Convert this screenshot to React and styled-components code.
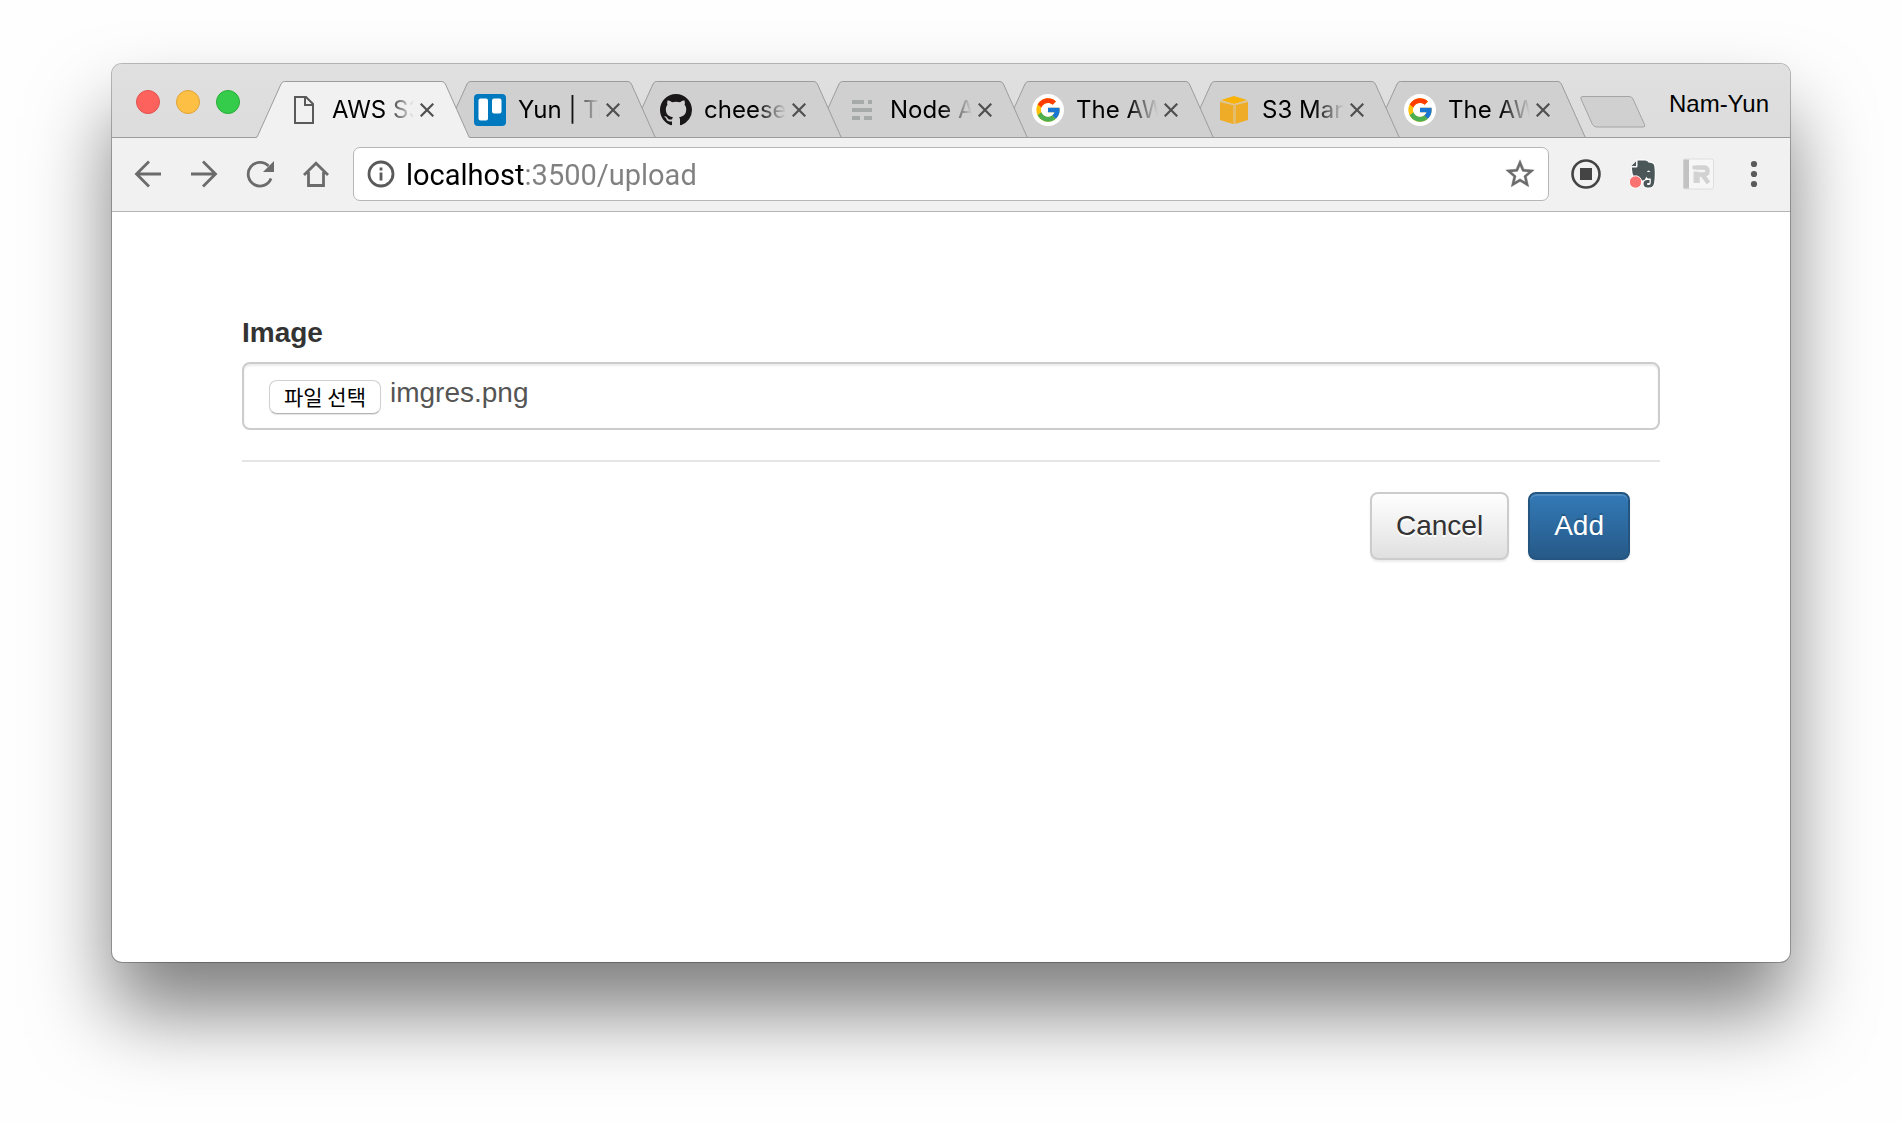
import React, { useState } from "react";
import styled, { createGlobalStyle } from "styled-components";
import { FcGoogle } from "react-icons/fc";

const GlobalStyle = createGlobalStyle`
  * { box-sizing: border-box; }
  body { margin: 0; background: #fefefe; }
  button, input { font: inherit; }
`;

const uiFont = `Inter, Roboto, sans-serif`;
const pageFont = `"Liberation Sans", Arial, sans-serif`;

const Desktop = styled.main`
  display: flex;
  flex-direction: column;
  min-height: 100vh;
  padding: 64px 112px 160px;
  overflow: hidden;
  font-family: ${pageFont};
`;

const Window = styled.section`
  flex: 1;
  display: flex;
  flex-direction: column;
  border-radius: 10px;
  background: #fff;
  box-shadow: 0 0 0 1px rgba(0, 0, 0, 0.26), 0 50px 80px rgba(0, 0, 0, 0.5);
`;

const TitleBar = styled.header`
  display: flex;
  align-items: flex-start;
  height: 74px;
  padding: 0 21px 0 24px;
  border-bottom: 1px solid #9c9c9c;
  border-radius: 10px 10px 0 0;
  background: linear-gradient(#e0e0e0, #dcdcdc);
`;

const Lights = styled.div`
  display: flex;
  gap: 16px;
  padding: 26px 16px 0 0;
`;

const Light = styled.button`
  width: 24px;
  height: 24px;
  padding: 0;
  border: 1px solid ${(p) => p.$edge};
  border-radius: 50%;
  background: ${(p) => p.$fill};
`;

const TabList = styled.nav`
  display: flex;
  align-self: flex-end;
  margin-bottom: -1px;
`;

const Tab = styled.div`
  position: relative;
  z-index: ${(p) => p.$level};
  display: flex;
  align-items: center;
  width: 214px;
  height: 57px;
  padding: 0 32px;
  & + & { margin-left: -28px; }
`;

const TabShape = styled.svg`
  position: absolute;
  inset: 0;
  z-index: -1;
`;

const TabButton = styled.button`
  display: flex;
  align-items: center;
  gap: 12px;
  width: 126px;
  padding: 0;
  border: 0;
  background: none;
  color: #000;
  text-align: left;
`;

const Favicon = styled.svg`
  flex: none;
  width: 32px;
  height: 32px;
`;

const GoogleBadge = styled.span`
  flex: none;
  display: grid;
  place-items: center;
  width: 32px;
  height: 32px;
  border-radius: 50%;
  background: #fff;
`;

const TabTitle = styled.span`
  flex: 1;
  overflow: hidden;
  white-space: nowrap;
  font: 24px/32px ${uiFont};
  mask-image: linear-gradient(90deg, #000 52px, transparent 82px);
`;

const CloseButton = styled.button`
  display: grid;
  place-items: center;
  width: 28px;
  height: 28px;
  margin-left: 2px;
  padding: 0;
  border: 0;
  background: none;
`;

const NewTabButton = styled.button`
  align-self: flex-end;
  display: block;
  margin: 0 0 9px -6px;
  padding: 0;
  border: 0;
  background: none;
  line-height: 0;
`;

const ProfileButton = styled.button`
  margin-left: auto;
  padding: 26px 0 0;
  border: 0;
  background: none;
  color: #000;
  font-size: 24px;
  line-height: 28px;
`;

const Toolbar = styled.div`
  display: flex;
  align-items: center;
  padding: 9px 20px 10px 22px;
  border-bottom: 1px solid #b4b4b4;
  background: #f1f1f1;
`;

const IconGroup = styled.div`
  display: flex;
  align-items: center;
  gap: ${(p) => p.$gap}px;
`;

const IconButton = styled.button`
  display: grid;
  place-items: center;
  width: ${(p) => p.$size}px;
  height: ${(p) => p.$size}px;
  padding: 0;
  border: 0;
  background: none;
  line-height: 0;
`;

const Omnibox = styled.div`
  flex: 1;
  display: flex;
  align-items: center;
  height: 54px;
  margin: 0 21px 0 23px;
  padding: 0 11px 0 13px;
  border: 1px solid #b6b6b6;
  border-radius: 7px;
  background: #fff;
`;

/* The host is black and the port and path are grey. */
const Address = styled.input`
  flex: 1;
  min-width: 0;
  height: 42px;
  padding: 2px 0 0 11px;
  border: 0;
  outline: 0;
  color: #000;
  font: 29px/40px Roboto, sans-serif;
  background: linear-gradient(90deg, #000 129px, #808080 129px);
  background-clip: text;
  -webkit-text-fill-color: transparent;
`;

const Content = styled.form`
  display: flex;
  flex-direction: column;
  padding: 101px 130px;
  color: #333;
  font-size: 28px;
  line-height: 40px;
`;

const FieldLabel = styled.label`
  align-self: flex-start;
  margin-bottom: 9px;
  font-weight: 700;
`;

const FileField = styled.div`
  position: relative;
  display: flex;
  align-items: flex-start;
  gap: 9px;
  height: 68px;
  padding: 9px 25px;
  border: 2px solid #ccc;
  border-radius: 8px;
  background: #fff;
  box-shadow: inset 0 2px 2px rgba(0, 0, 0, 0.075);
`;

const FileInput = styled.input`
  position: absolute;
  width: 1px;
  height: 1px;
  opacity: 0;
`;

const FileButton = styled.label`
  margin-top: 7px;
  padding: 0 14px 2px;
  border: 1px solid #d0d0d0;
  border-bottom-color: #b4b4b4;
  border-radius: 8px;
  background: #fff;
  box-shadow: 0 1px 1px rgba(0, 0, 0, 0.1);
  color: #000;
  font: 21px/30px "Noto Sans CJK KR", sans-serif;
`;

const FileName = styled.span`
  color: #555;
`;

const Divider = styled.hr`
  width: 100%;
  margin: 30px 0;
  border: 0;
  border-top: 2px solid #e5e5e5;
`;

const Actions = styled.div`
  display: flex;
  justify-content: flex-end;
  gap: 19px;
  padding-right: 30px;
`;

const Button = styled.button`
  padding: 12px 24px;
  border: 2px solid ${(p) => (p.$primary ? "#245580" : "#ccc")};
  border-radius: 8px;
  background: ${(p) =>
    p.$primary
      ? "linear-gradient(#337ab7, #265a88)"
      : "linear-gradient(#fff, #e0e0e0)"};
  box-shadow: inset 0 2px 0 rgba(255, 255, 255, 0.15), 0 2px 2px rgba(0, 0, 0, 0.075);
  color: ${(p) => (p.$primary ? "#fff" : "#333")};
  text-shadow: 0 ${(p) => (p.$primary ? "-2px 0 rgba(0, 0, 0, 0.2)" : "2px 0 #fff")};
`;

const FileIcon = () => (
  <Favicon viewBox="0 0 32 32" fill="none" stroke="#5a5a5a" strokeWidth="2">
    <path d="M7 3H18L25 10V29H7Z" />
    <path d="M17 3V11H25" />
  </Favicon>
);

const TrelloIcon = () => (
  <Favicon viewBox="0 0 32 32">
    <rect width="32" height="32" rx="4" fill="#0079bf" />
    <rect x="4.5" y="4.5" width="9.5" height="22" rx="2" fill="#fff" />
    <rect x="18" y="4.5" width="9.5" height="15" rx="2" fill="#fff" />
  </Favicon>
);

const GithubIcon = () => (
  <Favicon viewBox="0 0 16 16" fill="#191717">
    <path d="M8 0C3.58 0 0 3.58 0 8c0 3.54 2.29 6.53 5.47 7.59.4.07.55-.17.55-.38 0-.19-.01-.82-.01-1.49-2.01.37-2.53-.49-2.69-.94-.09-.23-.48-.94-.82-1.13-.28-.15-.68-.52-.01-.53.63-.01 1.08.58 1.23.82.72 1.21 1.87.87 2.33.66.07-.52.28-.87.51-1.07-1.78-.2-3.64-.89-3.64-3.95 0-.87.31-1.59.82-2.15-.08-.2-.36-1.02.08-2.12 0 0 .67-.21 2.2.82.64-.18 1.32-.27 2-.27.68 0 1.36.09 2 .27 1.53-1.04 2.2-.82 2.2-.82.44 1.1.16 1.92.08 2.12.51.56.82 1.27.82 2.15 0 3.07-1.87 3.75-3.65 3.95.29.25.54.73.54 1.48 0 1.07-.01 1.93-.01 2.2 0 .21.15.46.55.38A8.013 8.013 0 0016 8c0-4.42-3.58-8-8-8z" />
  </Favicon>
);

const NodeIcon = () => (
  <Favicon viewBox="0 0 32 32" fill="#a6abaa">
    <path d="M6 6h12v4H6zM22 6h4v4h-4zM6 14h20v4H6zM6 22h8v4H6zM18 22h8v4h-8z" />
  </Favicon>
);

const GoogleIcon = () => (
  <GoogleBadge>
    <FcGoogle size={28} />
  </GoogleBadge>
);

const CubeIcon = () => (
  <Favicon viewBox="0 0 32 32">
    <path d="M2 8L15 11V30L2 26Z" fill="#efad27" />
    <path d="M30 8L17 11V30L30 26Z" fill="#efad27" />
    <path d="M15 11h3v19h-3z" fill="#e5bd6a" />
    <path d="M3 6L16 2L29 6L16 10Z" fill="#f9b208" />
    <path d="M2 7L16 10.5L30 7" fill="none" stroke="#e5c27a" strokeWidth="1" />
  </Favicon>
);

const tabs = [
  { title: "AWS S3", Icon: FileIcon },
  { title: "Yun | Trello", Icon: TrelloIcon },
  { title: "cheese10", Icon: GithubIcon },
  { title: "Node API", Icon: NodeIcon },
  { title: "The AWS", Icon: GoogleIcon },
  { title: "S3 Management", Icon: CubeIcon },
  { title: "The AWS", Icon: GoogleIcon },
];

const tabEdge =
  "M0 56.5Q1 56.5 1.6 55L25 3Q26.3 .5 28.3 .5H186Q188 .5 189.4 3L212.6 55Q213 56.5 214 56.5";

function BrowserTab({ title, Icon, active, level }) {
  return (
    <Tab $level={level}>
      <TabShape width="214" height="57" viewBox="0 0 214 57">
        <path
          d={active ? `${tabEdge}V57H0Z` : tabEdge}
          fill={active ? "#f1f1f1" : "#d0d0d0"}
        />
        <path d={active ? tabEdge : `${tabEdge}H0`} fill="none" stroke="#9c9c9c" />
      </TabShape>
      <TabButton type="button" aria-current={active ? "page" : undefined}>
        <Icon />
        <TabTitle>{title}</TabTitle>
      </TabButton>
      <CloseButton type="button" aria-label={`Close ${title}`}>
        <svg width="14" height="14" viewBox="0 0 14 14" stroke="#505050" strokeWidth="2.2">
          <path d="M.7 .7L13.3 13.3M13.3 .7L.7 13.3" />
        </svg>
      </CloseButton>
    </Tab>
  );
}

const navIcons = [
  ["Back", <path d="M27 14H3M15 1.5L2.5 14L15 26.5" />],
  ["Forward", <path d="M1 14H25M13 1.5L25.5 14L13 26.5" />],
  [
    "Reload",
    <>
      <path d="M25 18.5A11.8 11.8 0 1 1 22.5 6" />
      <path d="M28 1V12H17Z" fill="#6b6b6b" stroke="none" />
    </>,
  ],
  ["Home", <path d="M2 15L14 3.2L26 15M6.5 12V25.5H21.5V12" />],
];

export default function App() {
  const [url, setUrl] = useState("localhost:3500/upload");
  const [fileName, setFileName] = useState("imgres.png");

  return (
    <Desktop>
      <GlobalStyle />
      <Window>
        <TitleBar>
          <Lights>
            <Light aria-label="Close window" $fill="#fd625d" $edge="#e2524d" />
            <Light aria-label="Minimize window" $fill="#fdbf44" $edge="#e0a336" />
            <Light aria-label="Zoom window" $fill="#35cb4b" $edge="#27ad38" />
          </Lights>
          <TabList aria-label="Tabs">
            {tabs.map((tab, i) => (
              <BrowserTab key={i} {...tab} active={i === 0} level={tabs.length - i} />
            ))}
          </TabList>
          <NewTabButton aria-label="New tab">
            <svg width="66" height="32" viewBox="0 0 66 32">
              <path
                d="M3 .5H49Q52 .5 53 3L64.5 28.5Q65.5 31 63 31H17Q14 31 12.5 28.5L1 3Q0 .5 3 .5Z"
                fill="#d0d0d0"
                stroke="#a4a4a4"
              />
            </svg>
          </NewTabButton>
          <ProfileButton>Nam-Yun</ProfileButton>
        </TitleBar>

        <Toolbar>
          <IconGroup $gap={28}>
            {navIcons.map(([name, shape]) => (
              <IconButton key={name} aria-label={name} $size={28}>
                <svg width="28" height="28" viewBox="0 0 28 28" fill="none" stroke="#6b6b6b" strokeWidth="2.8">
                  {shape}
                </svg>
              </IconButton>
            ))}
          </IconGroup>
          <Omnibox>
            <IconButton aria-label="Site information" $size={28}>
              <svg width="28" height="28" viewBox="0 0 28 28" fill="none" stroke="#5a5a5a" strokeWidth="2.8">
                <circle cx="14" cy="14" r="12" />
                <path d="M14 7.5V10.5M14 12.5V20.5" />
              </svg>
            </IconButton>
            <Address aria-label="Address" value={url} onChange={(e) => setUrl(e.target.value)} />
            <IconButton aria-label="Bookmark this page" $size={34}>
              <svg width="34" height="34" viewBox="0 0 24 24" fill="#6b6b6b" stroke="#6b6b6b" strokeWidth=".3">
                <path d="M22 9.24l-7.19-.62L12 2 9.19 8.63 2 9.24l5.46 4.73L5.82 21 12 17.27 18.18 21l-1.63-7.03L22 9.24zM12 15.4l-3.76 2.27 1-4.28-3.32-2.88 4.38-.38L12 6.1l1.71 4.04 4.38.38-3.32 2.88 1 4.28L12 15.4z" />
              </svg>
            </IconButton>
          </Omnibox>
          <IconGroup $gap={24}>
            <IconButton aria-label="Recorder" $size={32}>
              <svg width="32" height="32" viewBox="0 0 32 32">
                <circle cx="16" cy="16" r="13.5" fill="none" stroke="#444" strokeWidth="2.6" />
                <rect x="10" y="10" width="12" height="12" fill="#444" />
              </svg>
            </IconButton>
            <IconButton aria-label="Evernote" $size={32}>
              <svg width="32" height="32" viewBox="0 0 32 32">
                <path
                  d="M11.5 2.5H19Q21.5 2.5 22.5 4.5L25.5 5Q28 5.5 28.3 8C29 13.500 29 20 28 25.500Q27 29.5 23 29.5H21.5Q17.5 29.5 17.5 25.8T21.5 22H23.5V25H22Q21 25 21 26T22 27H22.800Q24.800 27 24.800 24.500V20.500H22.300Q20.800 20.500 20.300 18.500L19.500 20.500Q18.800 22.500 16.500 22.500L12 21Q7.500 20 6.500 15L5.800 9.500H10Q11.500 9.500 11.500 8Z"
                  fill="#4b5659"
                  stroke="#fff"
                  strokeWidth="2"
                  paintOrder="stroke"
                />
                <path d="M5.5 8L10 3.500V8Z" fill="#4b5659" />
                <path d="M20.800 14Q22.500 11 24.500 14Z" fill="#fff" />
                <circle cx="9.5" cy="24" r="6.2" fill="#f97373" stroke="#fff" />
              </svg>
            </IconButton>
            <IconButton aria-label="Reader" $size={32}>
              <svg width="32" height="32" viewBox="0 0 32 32">
                <rect x="1.5" y="1" width="30" height="30" rx="2" fill="#f6f6f6" stroke="#dedede" />
                <rect x="1.5" y="1.5" width="5.500" height="29" fill="#c2c2c2" />
                <circle cx="12.5" cy="9.5" r="2.2" fill="#d2d2d2" />
                <path
                  d="M14 9.500H21.500Q25.500 9.500 25.500 13T21.500 16.500H15.500V25M20.500 17L26.500 25"
                  fill="none"
                  stroke="#d2d2d2"
                  strokeWidth="4.500"
                />
                <path d="M11.500 13.500h5V25h-5z" fill="#d2d2d2" />
              </svg>
            </IconButton>
            <IconButton aria-label="Menu" $size={32}>
              <svg width="32" height="32" viewBox="0 0 32 32" fill="#5a5a5a">
                <circle cx="16" cy="6" r="3.1" />
                <circle cx="16" cy="16" r="3.1" />
                <circle cx="16" cy="26" r="3.1" />
              </svg>
            </IconButton>
          </IconGroup>
        </Toolbar>

        <Content onSubmit={(e) => e.preventDefault()}>
          <FieldLabel htmlFor="image">Image</FieldLabel>
          <FileField>
            <FileInput
              id="image"
              type="file"
              onChange={(e) => setFileName(e.target.files[0]?.name ?? "")}
            />
            <FileButton htmlFor="image">파일 선택</FileButton>
            <FileName>{fileName}</FileName>
          </FileField>
          <Divider />
          <Actions>
            <Button type="button">Cancel</Button>
            <Button type="submit" $primary>
              Add
            </Button>
          </Actions>
        </Content>
      </Window>
    </Desktop>
  );
}
